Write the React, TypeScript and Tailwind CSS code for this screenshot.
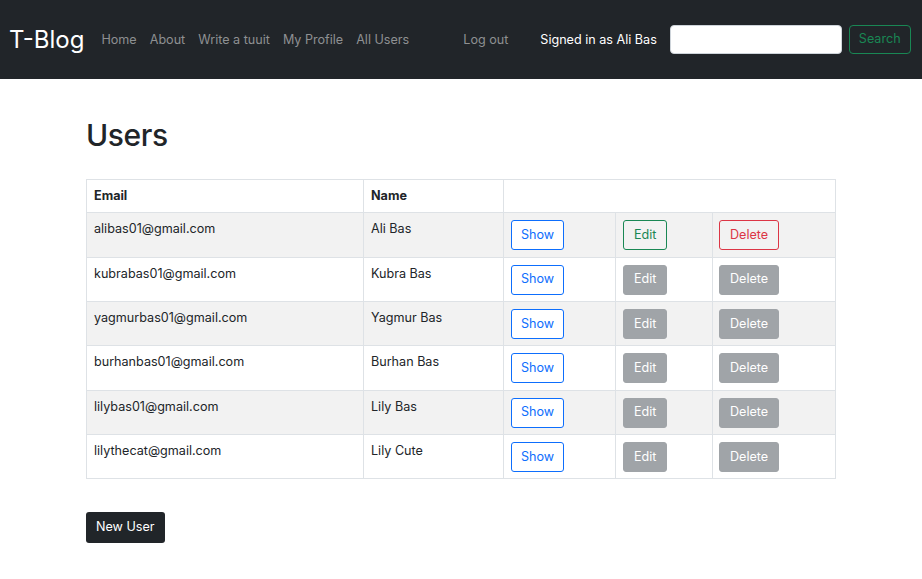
import React from "react";

const users = [
  { email: "alibas01@gmail.com", name: "Ali Bas", own: true },
  { email: "kubrabas01@gmail.com", name: "Kubra Bas", own: false },
  { email: "yagmurbas01@gmail.com", name: "Yagmur Bas", own: false },
  { email: "burhanbas01@gmail.com", name: "Burhan Bas", own: false },
  { email: "lilybas01@gmail.com", name: "Lily Bas", own: false },
  { email: "lilythecat@gmail.com", name: "Lily Cute", own: false },
];

export default function App() {
  return (
    <div className="min-h-[579px] bg-white text-[#212529] text-[12.6px] leading-[1.5]" style={{ fontFamily: "Inter, 'Liberation Sans', sans-serif" }}>
      <nav className="h-[79px] bg-[#212529] flex items-center pl-[9px] pr-[10px] whitespace-nowrap">
        <span className="shrink-0 text-white text-[24px] leading-none mr-[17px]">T-Blog</span>
        <div className="shrink-0 flex items-center gap-[13px] pt-[2px] text-[12.6px] text-[#8e9092]">
          <span>Home</span>
          <span>About</span>
          <span>Write a tuuit</span>
          <span>My Profile</span>
          <span>All Users</span>
        </div>
        <span className="shrink-0 ml-[54px] pt-[2px] text-[12.6px] text-[#8e9092]">Log out</span>
        <span className="shrink-0 ml-[32px] pt-[2px] text-[12.6px] text-white">Signed in as Ali Bas</span>
        <div className="shrink-0 ml-[13px] w-[172px] h-[29px] bg-white rounded-[4px] border border-[#ced4da]"></div>
        <button className="shrink-0 ml-[7px] h-[29px] px-[9px] rounded-[4px] border border-[#198754] text-[#198754] text-[12.6px]">Search</button>
      </nav>

      <main className="pl-[86px] pr-[87px]">
        <h1 className="mt-[38px] text-[30px] tracking-[-0.4px] font-medium leading-[1.24] text-[#212529]">Users</h1>
        <table className="mt-[25px] w-[749px] border-collapse border border-[#dee2e6] table-fixed">
          <colgroup>
            <col className="w-[277px]" />
            <col className="w-[140px]" />
            <col className="w-[112px]" />
            <col className="w-[97px]" />
            <col className="w-[123px]" />
          </colgroup>
          <thead>
            <tr className="h-[33px]">
              <th className="text-left font-bold px-[7px] py-[6px] border border-[#dee2e6]">Email</th>
              <th className="text-left font-bold px-[7px] py-[6px] border border-[#dee2e6]">Name</th>
              <th colSpan={3} className="border border-[#dee2e6]"></th>
            </tr>
          </thead>
          <tbody>
            {users.map((u, i) => (
              <tr key={u.email} className={i % 2 === 0 ? "bg-[#f2f2f2] h-[44.33px]" : "bg-white h-[44.33px]"}>
                <td className="align-top px-[7px] pt-[7px] pb-[5px] border border-[#dee2e6]">{u.email}</td>
                <td className="align-top px-[7px] pt-[7px] pb-[5px] border border-[#dee2e6]">{u.name}</td>
                <td className="align-top px-[7px] pt-[7px] pb-[5px] border border-[#dee2e6]">
                  <button className="block h-[30px] px-[9px] rounded-[3px] border border-[#0d6efd] text-[#0d6efd] bg-white leading-none">Show</button>
                </td>
                <td className="align-top px-[7px] pt-[7px] pb-[5px] border border-[#dee2e6]">
                  {u.own ? (
                    <button className="block h-[30px] px-[10px] rounded-[3px] border border-[#198754] text-[#198754] leading-none">Edit</button>
                  ) : (
                    <button className="block h-[30px] px-[10px] rounded-[3px] border border-[#a0a4a8] bg-[#a0a4a8] text-white leading-none">Edit</button>
                  )}
                </td>
                <td className="align-top px-[6px] pt-[7px] pb-[5px] border border-[#dee2e6]">
                  {u.own ? (
                    <button className="block h-[30px] px-[10px] rounded-[3px] border border-[#dc3545] text-[#dc3545] leading-none">Delete</button>
                  ) : (
                    <button className="block h-[30px] px-[10px] rounded-[3px] border border-[#a0a4a8] bg-[#a0a4a8] text-white leading-none">Delete</button>
                  )}
                </td>
              </tr>
            ))}
          </tbody>
        </table>
        <button className="mt-[33px] h-[31px] px-[10px] rounded-[3px] bg-[#212529] text-white leading-none">New User</button>
      </main>
    </div>
  );
}
